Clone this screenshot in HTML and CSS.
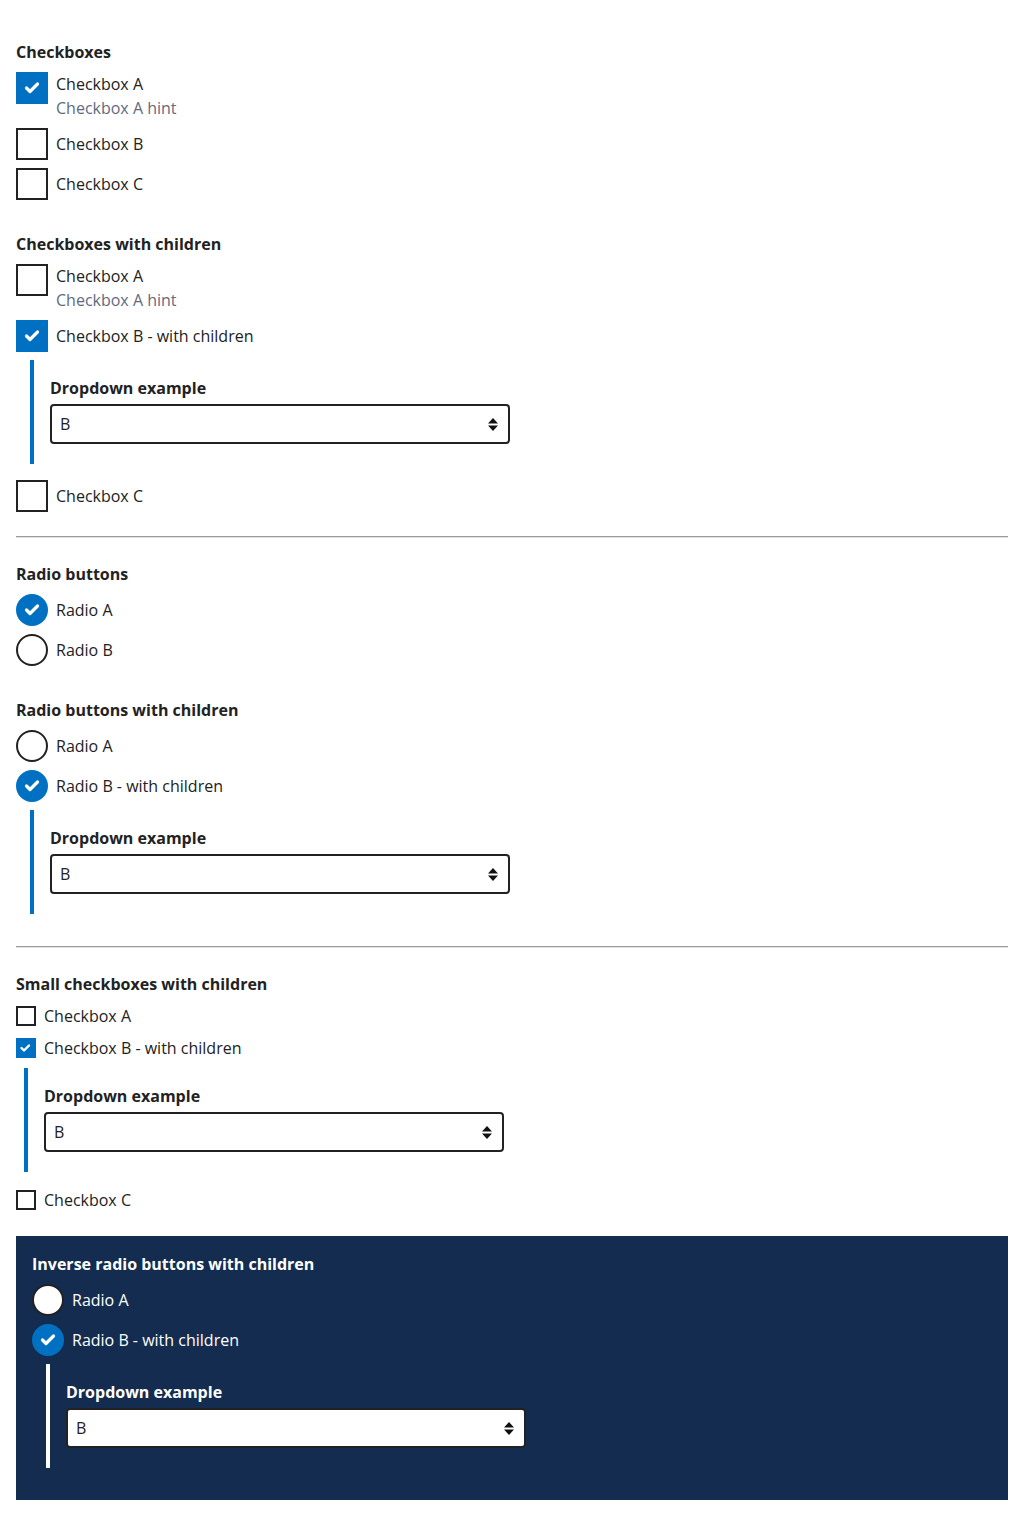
FILE: index.html
```html
<!DOCTYPE html>
<html lang="en">
<head>
<meta charset="utf-8">
<title>Choice controls</title>
<link rel="stylesheet" href="styles.css">
</head>
<body>
<main class="page">

  <section class="group">
    <h2 class="legend">Checkboxes</h2>
    <div class="choice">
      <span class="box box--checked"><svg viewBox="0 0 32 32" class="tick"><path d="M10.5 16l3.5 3.5 7.5-7.5" /></svg></span>
      <div class="text text--hinted"><div class="label">Checkbox A</div><div class="hint">Checkbox A hint</div></div>
    </div>
    <div class="choice">
      <span class="box"></span>
      <div class="text"><div class="label">Checkbox B</div></div>
    </div>
    <div class="choice">
      <span class="box"></span>
      <div class="text"><div class="label">Checkbox C</div></div>
    </div>
  </section>

  <section class="group group--before-rule">
    <h2 class="legend">Checkboxes with children</h2>
    <div class="choice">
      <span class="box"></span>
      <div class="text text--hinted"><div class="label">Checkbox A</div><div class="hint">Checkbox A hint</div></div>
    </div>
    <div class="choice">
      <span class="box box--checked"><svg viewBox="0 0 32 32" class="tick"><path d="M10.5 16l3.5 3.5 7.5-7.5" /></svg></span>
      <div class="text"><div class="label">Checkbox B - with children</div></div>
    </div>
    <div class="children">
      <div class="field-label">Dropdown example</div>
      <div class="select"><span>B</span><svg class="arrows" viewBox="0 0 12 16"><path d="M1 7.5L6 2l5 5.5z M1 9.5l5 5.5 5-5.5z"/></svg></div>
    </div>
    <div class="choice">
      <span class="box"></span>
      <div class="text"><div class="label">Checkbox C</div></div>
    </div>
  </section>

  <hr class="rule">

  <section class="group">
    <h2 class="legend">Radio buttons</h2>
    <div class="choice">
      <span class="box box--radio box--checked"><svg viewBox="0 0 32 32" class="tick"><path d="M10.5 16l3.5 3.5 7.5-7.5" /></svg></span>
      <div class="text"><div class="label">Radio A</div></div>
    </div>
    <div class="choice">
      <span class="box box--radio"></span>
      <div class="text"><div class="label">Radio B</div></div>
    </div>
  </section>

  <section class="group group--before-rule">
    <h2 class="legend">Radio buttons with children</h2>
    <div class="choice">
      <span class="box box--radio"></span>
      <div class="text"><div class="label">Radio A</div></div>
    </div>
    <div class="choice">
      <span class="box box--radio box--checked"><svg viewBox="0 0 32 32" class="tick"><path d="M10.5 16l3.5 3.5 7.5-7.5" /></svg></span>
      <div class="text"><div class="label">Radio B - with children</div></div>
    </div>
    <div class="children">
      <div class="field-label">Dropdown example</div>
      <div class="select"><span>B</span><svg class="arrows" viewBox="0 0 12 16"><path d="M1 7.5L6 2l5 5.5z M1 9.5l5 5.5 5-5.5z"/></svg></div>
    </div>
  </section>

  <hr class="rule">

  <section class="group group--small">
    <h2 class="legend">Small checkboxes with children</h2>
    <div class="choice choice--small">
      <span class="box box--small"></span>
      <div class="text"><div class="label">Checkbox A</div></div>
    </div>
    <div class="choice choice--small">
      <span class="box box--small box--checked"><svg viewBox="0 0 20 20" class="tick tick--small"><path d="M5.5 10l2.5 2.5 5-5" /></svg></span>
      <div class="text"><div class="label">Checkbox B - with children</div></div>
    </div>
    <div class="children children--small">
      <div class="field-label">Dropdown example</div>
      <div class="select"><span>B</span><svg class="arrows" viewBox="0 0 12 16"><path d="M1 7.5L6 2l5 5.5z M1 9.5l5 5.5 5-5.5z"/></svg></div>
    </div>
    <div class="choice choice--small">
      <span class="box box--small"></span>
      <div class="text"><div class="label">Checkbox C</div></div>
    </div>
  </section>

  <section class="group group--inverse">
    <h2 class="legend">Inverse radio buttons with children</h2>
    <div class="choice">
      <span class="box box--radio box--inverse"></span>
      <div class="text"><div class="label">Radio A</div></div>
    </div>
    <div class="choice">
      <span class="box box--radio box--checked"><svg viewBox="0 0 32 32" class="tick"><path d="M10.5 16l3.5 3.5 7.5-7.5" /></svg></span>
      <div class="text"><div class="label">Radio B - with children</div></div>
    </div>
    <div class="children children--inverse">
      <div class="field-label">Dropdown example</div>
      <div class="select"><span>B</span><svg class="arrows" viewBox="0 0 12 16"><path d="M1 7.5L6 2l5 5.5z M1 9.5l5 5.5 5-5.5z"/></svg></div>
    </div>
  </section>

</main>
</body>
</html>
```

FILE: styles.css
```css
* { box-sizing: border-box; }

html, body {
  margin: 0;
  padding: 0;
  background: #ffffff;
}

body {
  font-family: "Open Sans", "Noto Sans", "Liberation Sans", sans-serif;
  font-size: 16px;
  line-height: 24px;
  color: #222222;
}

.page {
  padding: 40px 16px 16px;
}

.group {
  display: flow-root;
  margin: 0 0 24px;
}

.group--before-rule {
  margin-bottom: 16px;
}

.group--small {
  margin-bottom: 16px;
}

.legend {
  margin: 0 0 8px;
  font-size: 16px;
  line-height: 24px;
  font-weight: 700;
  color: #222222;
}

.choice {
  display: flex;
  align-items: flex-start;
  gap: 8px;
  margin-bottom: 8px;
}

.box {
  flex: none;
  width: 32px;
  height: 32px;
  border: 2px solid #222222;
  background: #ffffff;
  display: flex;
  align-items: center;
  justify-content: center;
}

.box--checked {
  background: #0071c2;
  border-color: #0071c2;
}

.box--radio {
  border-radius: 50%;
}

.box--inverse {
  background: #ffffff;
  border-color: #222222;
}

.tick {
  width: 32px;
  height: 32px;
  flex: none;
  fill: none;
  stroke: #ffffff;
  stroke-width: 3.2;
  stroke-linecap: round;
  stroke-linejoin: round;
}

.tick--small {
  width: 20px;
  height: 20px;
  stroke-width: 2.4;
}

.text {
  padding-top: 4px;
}

.text--hinted {
  padding-top: 0;
}

.label {
  font-size: 16px;
  line-height: 24px;
}

.hint {
  font-size: 16px;
  line-height: 24px;
  color: #5f6b7d;
}

.choice--small {
  align-items: center;
}

.box--small {
  width: 20px;
  height: 20px;
  margin-top: 2px;
  margin-bottom: 2px;
}

.choice--small .text {
  padding-top: 0;
}

.children {
  margin: 0 0 16px 14px;
  padding: 16px 0 20px 16px;
  border-left: 4px solid #0071c2;
}

.children--small {
  margin-left: 8px;
}

.field-label {
  font-weight: 700;
  margin-bottom: 4px;
}

.select {
  width: 460px;
  height: 40px;
  border: 2px solid #222222;
  border-radius: 4px;
  background: #ffffff;
  display: flex;
  align-items: center;
  justify-content: space-between;
  padding: 0 9px 0 8px;
  color: #222222;
}

.arrows {
  width: 12px;
  height: 16px;
  fill: #111111;
}

.rule {
  margin: 0 0 24px;
  border: 0;
  border-top: 1px solid #9a9a9a;
  border-bottom: 1px solid #e3e3e3;
  height: 0;
}

.group--inverse {
  background: #132c4f;
  color: #ffffff;
  padding: 16px;
  margin: 0;
}

.group--inverse .legend {
  color: #ffffff;
}

.children--inverse {
  border-left-color: #ffffff;
}

.children--inverse .select {
  color: #222222;
}
```
